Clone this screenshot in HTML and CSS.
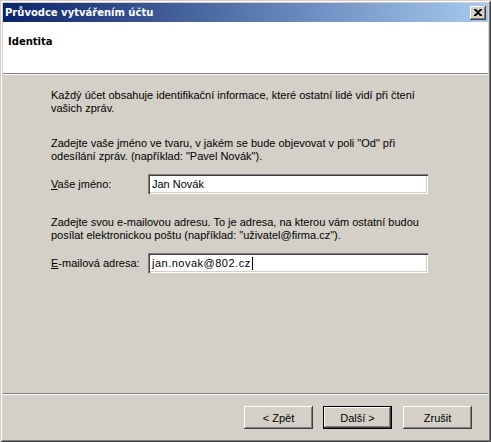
FILE: index.html
```html
<!DOCTYPE html>
<html lang="cs">
<head>
  <meta charset="UTF-8">
  <title>Průvodce vytvářením účtu</title>
  <link rel="stylesheet" href="styles.css">
</head>
<body>

  <div class="window">
    <div class="titlebar">
      <span class="title">Průvodce vytvářením účtu</span>
      <span class="close">
        <svg width="8" height="7" viewBox="0 0 8 7"><path d="M0 0h2l2 2 2-2h2v1L5 3.5 8 6v1H6L4 5 2 7H0V6l3-2.5L0 1z" fill="#000"/></svg>
      </span>
    </div>

    <div class="header">
      <h1>Identita</h1>
    </div>

    <div class="content">
      <p>Každý účet obsahuje identifikační informace, které ostatní lidé vidí při čtení vašich zpráv.</p>

      <p>Zadejte vaše jméno ve tvaru, v jakém se bude objevovat v poli "Od" při odesílání zpráv. (například: "Pavel Novák").</p>
      <div class="field">
        <label><u>V</u>aše jméno:</label>
        <div class="edit">Jan Novák</div>
      </div>

      <p>Zadejte svou e-mailovou adresu. To je adresa, na kterou vám ostatní budou posílat elektronickou poštu (například: "uživatel@firma.cz").</p>
      <div class="field">
        <label><u>E</u>-mailová adresa:</label>
        <div class="edit email">jan.novak@802.cz<span class="caret"></span></div>
      </div>
    </div>

    <div class="footer">
      <button>&lt; Zpět</button>
      <button class="default">Další &gt;</button>
      <button class="cancel">Zrušit</button>
    </div>
  </div>

</body>
</html>
```

FILE: styles.css
```css
body {
  margin: 0;
  background-color: #d4d0c8;
  font-family: "Liberation Sans", Arial, sans-serif;
  font-size: 11px;
  color: #000;
}

.window {
  width: 491px;
  height: 442px;
  box-sizing: border-box;
  padding: 3px;
  background-color: #d4d0c8;
  box-shadow: inset 1px 1px #d4d0c8, inset -1px -1px #404040, inset 2px 2px #fff, inset -2px -2px #808080;
  display: flex;
  flex-direction: column;
}

.titlebar {
  height: 19px;
  background: linear-gradient(to right, #0a246a, #a6caf0);
  display: flex;
  align-items: center;
  justify-content: space-between;
  padding: 0 2px 0 2px;
}

.title {
  color: #fff;
  font-family: "DejaVu Sans", Verdana, sans-serif;
  font-size: 10px;
  font-weight: bold;
}

.close {
  width: 16px;
  height: 14px;
  box-sizing: border-box;
  background-color: #d4d0c8;
  box-shadow: inset -1px -1px #404040, inset 1px 1px #fff, inset -2px -2px #808080;
  display: flex;
  align-items: center;
  justify-content: center;
  padding-bottom: 1px;
}

.header {
  height: 52px;
  background-color: #fff;
  border-bottom: 1px solid #808080;
  box-shadow: 0 1px #fff;
  padding: 13px 5px 0;
  box-sizing: border-box;
}

h1 {
  margin: 0;
  font-family: "DejaVu Sans", Verdana, sans-serif;
  font-size: 10px;
  line-height: 13px;
  font-weight: bold;
}

.content {
  flex: 1;
  padding: 15px 0 0 48px;
}

p {
  margin: 0 0 22px;
  line-height: 13px;
  width: 380px;
}

.field {
  display: flex;
  align-items: center;
  margin: -11px 0 22px;
}

label {
  width: 97px;
}

.edit {
  width: 280px;
  height: 20px;
  box-sizing: border-box;
  background-color: #fff;
  box-shadow: inset 1px 1px #808080, inset 2px 2px #404040, inset -1px -1px #fff, inset -2px -2px #d4d0c8;
  padding: 0 4px;
  line-height: 20px;
  display: flex;
  align-items: center;
}

.email {
  letter-spacing: 0.5px;
}

.caret {
  width: 1px;
  height: 13px;
  background-color: #000;
  margin-left: 1px;
}

.footer {
  border-top: 1px solid #808080;
  box-shadow: inset 0 1px #fff;
  padding: 12px 16px 0 0;
  height: 46px;
  box-sizing: border-box;
  display: flex;
  justify-content: flex-end;
  gap: 10px;
}

button {
  width: 69px;
  height: 23px;
  background-color: #d4d0c8;
  border: none;
  font-family: inherit;
  font-size: 11px;
  color: #000;
  box-shadow: inset -1px -1px #404040, inset 1px 1px #fff, inset -2px -2px #808080;
}

button.default {
  box-shadow: inset 0 0 0 1px #000, inset -2px -2px #404040, inset 2px 2px #fff, inset -3px -3px #808080;
}

button.cancel {
  margin-left: 1px;
}
```
